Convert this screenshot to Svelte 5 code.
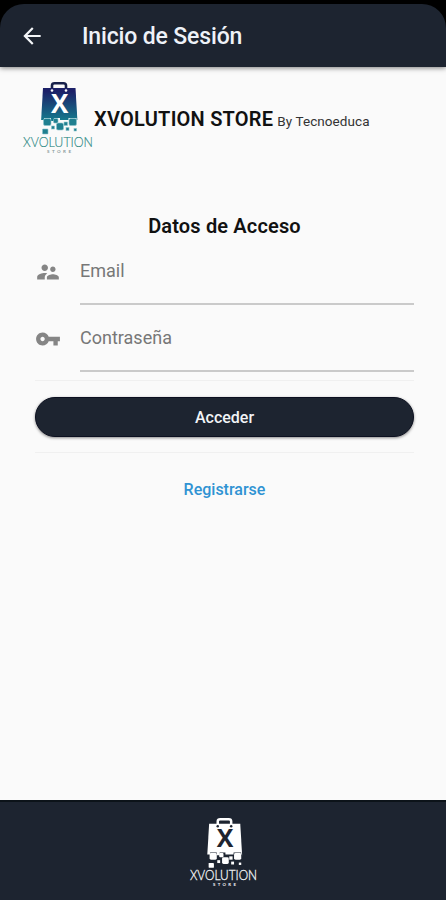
<script>
  let email    = $state('')
  let password = $state('')

  function submit(e) {
    e.preventDefault()
  }
</script>

<!-- Shopping bag that breaks into squares, with the store name under it -->
{#snippet logo(kind)}
  <svg class="logo {kind}" viewBox="0 0 72 76" role="img" aria-label="Xvolution Store">
    <defs>
      <linearGradient id="bag-{kind}" x1="0" y1="0" x2="0" y2="1">
        <stop class="stop-top" offset="0.1" />
        <stop class="stop-bottom" offset="1" />
      </linearGradient>
    </defs>
    <path class="handle" d="M30 11V5.500Q30 3.200 32.500 3.200H41.500Q44 3.200 44 5.500V11" />
    <path fill="url(#bag-{kind})" d="M21 8H53.500L55.500 42H19Z" />
    <circle class="cut" cx="30" cy="10.500" r="1.300" />
    <circle class="cut" cx="44" cy="10.500" r="1.300" />
    <text class="mark" x="37.700" y="32.500" text-anchor="middle">X</text>
    <path class="cut" d="M18.500 40H22V38H29V41H32V38H38V40H43V40H46.500V38H54.500V40H56V46H18.500Z" />
    <g class="bits">
      <rect x="21.500" y="38.500" width="7.500" height="7" rx="1.500" />
      <rect x="31.500" y="38.500" width="4.500" height="4.500" rx="1" />
      <rect x="34.500" y="43" width="7" height="7" rx="1.500" />
      <rect x="47" y="38.500" width="7.500" height="7" rx="1.500" />
      <rect x="42" y="42" width="3.500" height="3.500" />
      <rect x="29.500" y="46" width="3" height="3" />
      <rect x="20.500" y="49" width="5.500" height="5" rx="0.500" />
      <rect x="44" y="47.500" width="3" height="3" />
      <rect x="52" y="48.500" width="2.500" height="2.500" />
    </g>
    <text class="name" x="1" y="67" textLength="70" lengthAdjust="spacingAndGlyphs">XVOLUTION</text>
    <text class="sub" x="25" y="73.200" textLength="24">STORE</text>
  </svg>
{/snippet}

<div class="screen">
  <div class="top">
    <header>
      <button class="back" aria-label="Volver">
        <svg viewBox="0 0 24 24"><path d="M20 11H7.830l5.590-5.590L12 4l-8 8 8 8 1.410-1.410L7.830 13H20v-2z" /></svg>
      </button>
      <h1>Inicio de Sesión</h1>
    </header>
  </div>

  <main>
    <div class="brand">
      {@render logo('color')}
      <p><strong>XVOLUTION STORE</strong><span>By Tecnoeduca</span></p>
    </div>

    <form onsubmit={submit}>
      <h2>Datos de Acceso</h2>

      <label class="field">
        <svg viewBox="0 0 24 24"><path d="M16.500 12c1.380 0 2.490-1.120 2.490-2.500S17.880 7 16.500 7C15.120 7 14 8.120 14 9.500s1.120 2.500 2.500 2.500zM9 11c1.660 0 2.990-1.340 2.990-3S10.660 5 9 5C7.340 5 6 6.340 6 8s1.340 3 3 3zm7.500 3c-1.830 0-5.500.920-5.500 2.750V19h11v-2.250c0-1.830-3.670-2.750-5.500-2.750zM9 13c-2.330 0-7 1.170-7 3.500V19h7v-2.250c0-.850.330-2.340 2.370-3.470C10.500 13.100 9.660 13 9 13z" /></svg>
        <input type="text" placeholder="Email" bind:value={email} />
      </label>

      <label class="field">
        <svg viewBox="0 0 24 24"><path d="M12.650 10C11.830 7.670 9.610 6 7 6c-3.310 0-6 2.690-6 6s2.690 6 6 6c2.610 0 4.830-1.670 5.650-4H17v4h4v-4h2v-4H12.650zM7 14c-1.100 0-2-.900-2-2s.900-2 2-2 2 .900 2 2-.900 2-2 2z" /></svg>
        <input type="password" placeholder="Contraseña" bind:value={password} />
      </label>

      <hr />
      <button class="submit">Acceder</button>
      <hr />
      <button type="button" class="register">Registrarse</button>
    </form>
  </main>

  <footer>
    {@render logo('white')}
  </footer>
</div>

<style>
  :global(*, *::before, *::after) { box-sizing: border-box; margin: 0; padding: 0; }
  :global(body) {
    background: #fafafa;
    font-family: Roboto, 'Noto Sans', sans-serif;
    color: #111;
  }

  button {
    border: none;
    background: none;
    font-family: inherit;
    cursor: pointer;
  }

  .screen {
    height: 100vh;
    display: flex;
    flex-direction: column;
    overflow: hidden;
  }

  .top {
    background: #000;
    padding-top: 4px;
    box-shadow: 0 1px 5px rgba(0, 0, 0, 0.5);
  }

  header {
    display: flex;
    align-items: center;
    height: 63px;
    padding-left: 19px;
    background: #1d2430;
    border-radius: 24px 24px 0 0;
  }

  .back { width: 26px; height: 26px; }
  .back svg { display: block; width: 26px; height: 26px; fill: #f3f5f8; }

  h1 {
    margin: 2px 0 0 37px;
    font-size: 23px;
    font-weight: 500;
    line-height: 28px;
    letter-spacing: -0.15px;
    color: #eef2f8;
  }

  main { flex: 1; }

  .brand {
    display: flex;
    align-items: center;
    height: 102px;
    padding-left: 22px;
    white-space: nowrap;
  }

  .brand p { padding-top: 3px; line-height: 24px; }
  .brand strong { font-size: 20px; font-weight: 600; letter-spacing: 0.22px; }
  .brand span { margin-left: 4px; font-size: 13.500px; letter-spacing: 0.08px; color: #333; }

  .logo { display: block; width: 72px; height: 76px; flex-shrink: 0; overflow: visible; }
  .logo.white { width: 69px; height: 73px; }

  .handle { fill: none; stroke-width: 2.6; }
  .mark { font: 700 26px 'Open Sans', sans-serif; }
  .name { font: 300 13.500px Lato, sans-serif; }
  .sub { font: 700 4.500px Lato, sans-serif; }

  .color .stop-top { stop-color: #1c2068; }
  .color .stop-bottom { stop-color: #147f8f; }
  .color .handle { stroke: #17204a; }
  .color .cut { fill: #fafafa; }
  .color .mark { fill: #fff; }
  .color .bits { fill: #1f7f90; stroke: #8cc5cc; stroke-width: 0.6; }
  .color .name { fill: #2f8a86; stroke: #2f8a86; stroke-width: 0.15; }
  .color .sub { fill: #8b9a9c; }

  .white .stop-top, .white .stop-bottom { stop-color: #fff; }
  .white .handle { stroke: #fff; }
  .white .cut, .white .mark { fill: #1d2430; }
  .white .bits { fill: #fff; }
  .white .name { fill: #f4f6f8; stroke: #f4f6f8; stroke-width: 0.3; }
  .white .sub { fill: #f4f6f8; }

  form {
    display: flex;
    flex-direction: column;
    padding: 43px 32px 0 35px;
  }

  h2 {
    font-size: 20px;
    font-weight: 600;
    line-height: 28px;
    letter-spacing: 0.15px;
    text-align: center;
  }

  .field {
    display: flex;
    align-items: flex-start;
    height: 67px;
  }

  .field svg {
    width: 26px;
    height: 26px;
    margin-top: 19px;
    fill: #858585;
  }

  .field input {
    flex: 1;
    height: 65px;
    margin-left: 19px;
    padding-bottom: 2px;
    border: none;
    border-bottom: 2px solid #cacaca;
    background: none;
    outline: none;
    font-family: inherit;
    font-size: 18px;
    color: #111;
  }

  .field input::placeholder { color: #777; }

  hr { border: none; border-top: 1px solid #f0f0f0; }
  .field + hr { margin-top: 6px; }

  .submit {
    height: 40px;
    margin: 16px 0 15px;
    border: 1px solid #0c1020;
    border-radius: 20px;
    background: #1d2430;
    box-shadow: 0 1px 3px rgba(0, 0, 0, 0.45);
    font-size: 16px;
    font-weight: 500;
    color: #f2f4f7;
  }

  .register {
    align-self: center;
    margin-top: 25px;
    line-height: 24px;
    font-size: 16px;
    font-weight: 500;
    color: #2f93d3;
  }

  footer {
    display: flex;
    justify-content: center;
    height: 100px;
    padding-top: 14px;
    border-top: 2px solid #0c1319;
    background: #1d2430;
  }
</style>
